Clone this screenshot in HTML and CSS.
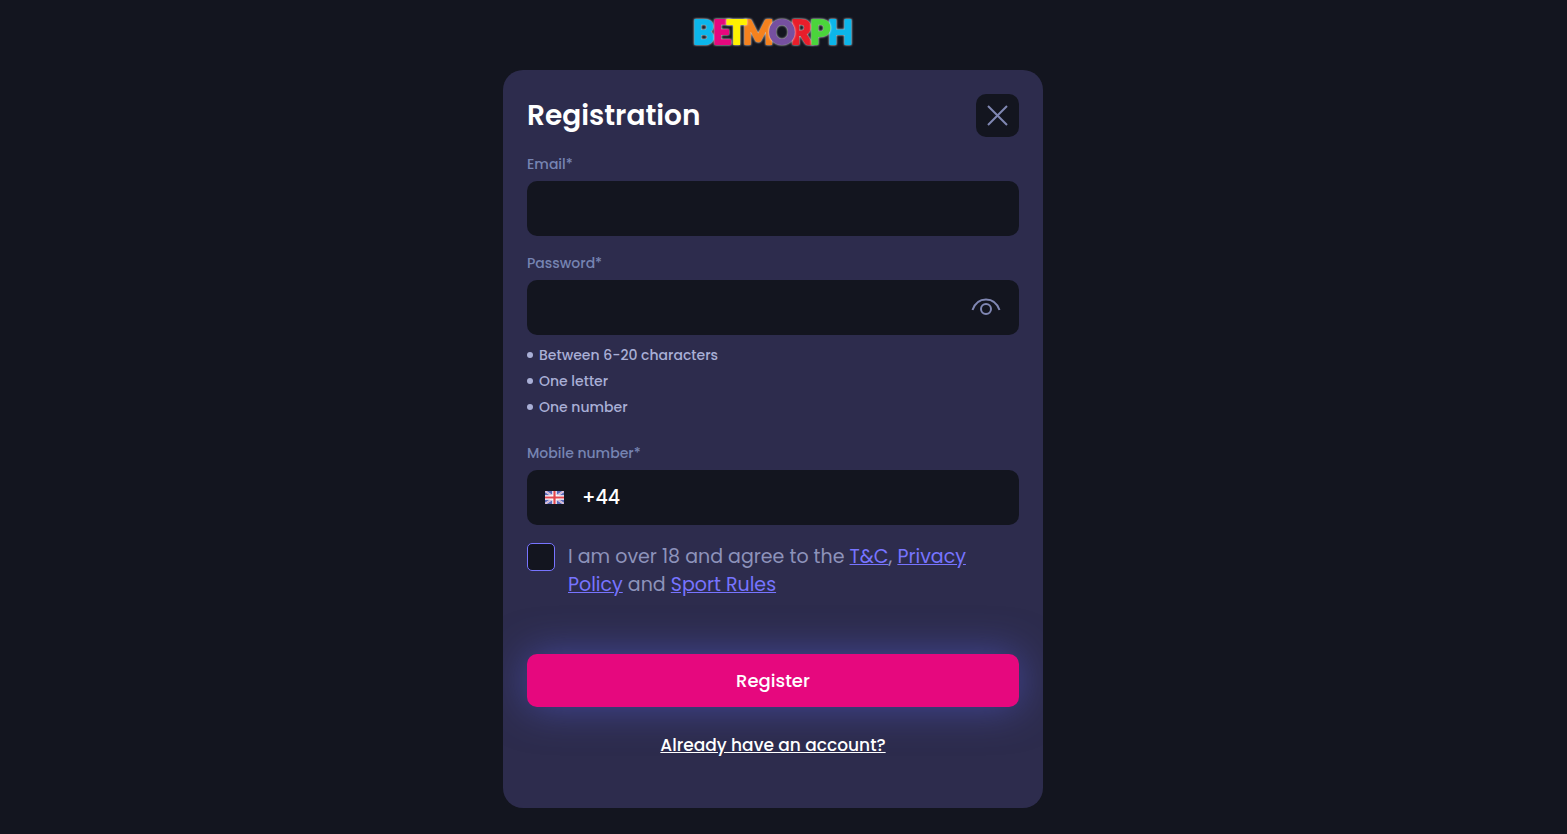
FILE: index.html
```html
<!DOCTYPE html>
<html lang="en">
<head>
    <meta charset="UTF-8">
    <meta name="viewport" content="width=device-width, initial-scale=1.0">
    <title>Registration - Betmorph</title>
    <link rel="stylesheet" href="styles.css">
</head>
<body>
    <header class="header">
        <a href="#" class="logo" aria-label="Betmorph">
            <svg width="160" height="30" viewBox="0 0 160 30">
                <text class="b" x="0" y="27">B</text>
                <text class="e" x="20" y="27">E</text>
                <text class="m" x="50" y="27">M</text>
                <text class="t" x="34" y="27">T</text>
                <text class="r" x="98" y="27">R</text>
                <text class="o" x="76" y="27">O</text>
                <text class="h" x="135" y="27">H</text>
                <text class="p" x="117" y="27">P</text>
            </svg>
        </a>
    </header>

    <main class="register-container">
        <div class="title-row">
            <h1>Registration</h1>
            <button type="button" class="close-btn" aria-label="Close">
                <svg width="21" height="21" viewBox="0 0 21 21"><path d="M1 1L20 20M20 1L1 20"/></svg>
            </button>
        </div>

        <form>
            <div class="field">
                <label for="email">Email*</label>
                <div class="input-box">
                    <input type="email" id="email" required>
                </div>
            </div>

            <div class="field">
                <label for="password">Password*</label>
                <div class="input-box">
                    <input type="password" id="password" required>
                    <button type="button" class="eye-btn" aria-label="Show password">
                        <svg width="30" height="20" viewBox="0 0 30 20"><path d="M1.500 12C4 5 8 1.500 15 1.500S26 5 28.500 12"/><circle cx="15" cy="11" r="5"/></svg>
                    </button>
                </div>
            </div>

            <ul class="rules">
                <li>Between 6-20 characters</li>
                <li>One letter</li>
                <li>One number</li>
            </ul>

            <div class="field">
                <label for="mobile">Mobile number*</label>
                <div class="input-box phone">
                    <svg class="flag" width="19" height="13" viewBox="0 0 19 13">
                        <rect width="19" height="13" fill="#5a68b8"/>
                        <path d="M0 0L19 13M19 0L0 13" stroke="#dcdaf0" stroke-width="2"/>
                        <path d="M0 0L19 13M19 0L0 13" stroke="#d98aa4" stroke-width="0.600"/>
                        <path d="M9.500 0V13M0 6.500H19" stroke="#fff" stroke-width="4.500"/>
                        <path d="M9.500 0V13M0 6.500H19" stroke="#e2474f" stroke-width="2.200"/>
                    </svg>
                    <input type="tel" id="mobile" value="+44" required>
                </div>
            </div>

            <div class="terms">
                <input type="checkbox" id="terms" required>
                <label for="terms">I am over 18 and agree to the <a href="#">T&amp;C</a>, <a href="#">Privacy Policy</a> and <a href="#">Sport Rules</a></label>
            </div>

            <button type="submit" class="register-btn">Register</button>
        </form>

        <div class="login-link">
            <a href="#">Already have an account?</a>
        </div>
    </main>
</body>
</html>
```

FILE: styles.css
```css
/* General Reset */
* {
    margin: 0;
    padding: 0;
    box-sizing: border-box;
}

body {
    font-family: 'Poppins', 'Inter', sans-serif;
    min-height: 100vh;
    padding: 17px 21px 26px 0;
    display: flex;
    flex-direction: column;
    align-items: center;
    background: #13151f;
    color: white;
}

.header {
    height: 53px;
}

.logo svg {
    display: block;
    overflow: visible;
}

.logo text {
    font-family: 'Lato', sans-serif;
    font-size: 32px;
    font-weight: 900;
    stroke-width: 2px;
    filter: drop-shadow(0 0 1px #fff);
}

.logo .b, .logo .h { fill: #0cb6ea; stroke: #0cb6ea; }
.logo .e { fill: #e6087e; stroke: #e6087e; }
.logo .t { fill: #fff200; stroke: #fff200; }
.logo .m { fill: #f5821f; stroke: #f5821f; }
.logo .o { fill: #7650a0; stroke: #7650a0; }
.logo .r { fill: #e81e2b; stroke: #e81e2b; }
.logo .p { fill: #4bd53c; stroke: #4bd53c; }

.register-container {
    width: 100%;
    max-width: 540px;
    padding: 24px 24px 49px;
    border-radius: 20px;
    background: #2d2c4d;
    overflow: hidden;
}

.title-row {
    display: flex;
    justify-content: space-between;
    align-items: center;
    margin-bottom: 15px;
}

.title-row h1 {
    font-size: 28px;
    font-weight: 600;
    line-height: 42px;
}

.close-btn {
    display: flex;
    justify-content: center;
    align-items: center;
    width: 43px;
    height: 43px;
    border: none;
    border-radius: 10px;
    background: #13151f;
    cursor: pointer;
}

.close-btn path,
.eye-btn path,
.eye-btn circle {
    fill: none;
    stroke: #8087b3;
    stroke-width: 2;
}

.field {
    margin-bottom: 15px;
}

.field label {
    display: block;
    margin-bottom: 5px;
    font-size: 14px;
    font-weight: 500;
    line-height: 24px;
    color: #7684b2;
}

.input-box {
    display: flex;
    align-items: center;
    height: 55px;
    padding: 0 18px;
    border-radius: 10px;
    background: #13151f;
}

.input-box input {
    flex: 1;
    min-width: 0;
    height: 100%;
    border: none;
    outline: none;
    background: transparent;
    color: white;
    font-family: inherit;
    font-size: 19px;
    font-weight: 500;
}

.eye-btn {
    border: none;
    background: none;
    cursor: pointer;
}

.eye-btn svg {
    display: block;
}

.phone {
    gap: 18px;
}

.rules {
    margin: -8px 0 21px;
    list-style: none;
}

.rules li {
    display: flex;
    align-items: center;
    gap: 6px;
    height: 26px;
    font-size: 14px;
    font-weight: 500;
    color: #a9afd6;
}

.rules li::before {
    content: '';
    width: 6px;
    height: 6px;
    border-radius: 50%;
    background: #a9afd6;
}

.terms {
    display: flex;
    align-items: flex-start;
    gap: 13px;
    margin: 18px 0 55px;
}

.terms input {
    flex: none;
    appearance: none;
    width: 28px;
    height: 28px;
    border: 1px solid #7774ff;
    border-radius: 5px;
    background: #13151f;
    cursor: pointer;
}

.terms input:checked {
    background: #7774ff;
}

.terms label {
    font-size: 19px;
    line-height: 28px;
    color: #8d93bb;
}

.terms a {
    color: #7774ff;
}

.register-btn {
    width: 100%;
    height: 53px;
    border: none;
    border-radius: 10px;
    background: #e6087e;
    box-shadow: 0 0 40px rgba(84, 91, 206, 0.6);
    color: white;
    font-family: inherit;
    font-size: 18px;
    font-weight: 500;
    cursor: pointer;
}

.login-link {
    margin-top: 25px;
    text-align: center;
    font-size: 17px;
    font-weight: 500;
    line-height: 27px;
}

.login-link a {
    color: white;
}
```
